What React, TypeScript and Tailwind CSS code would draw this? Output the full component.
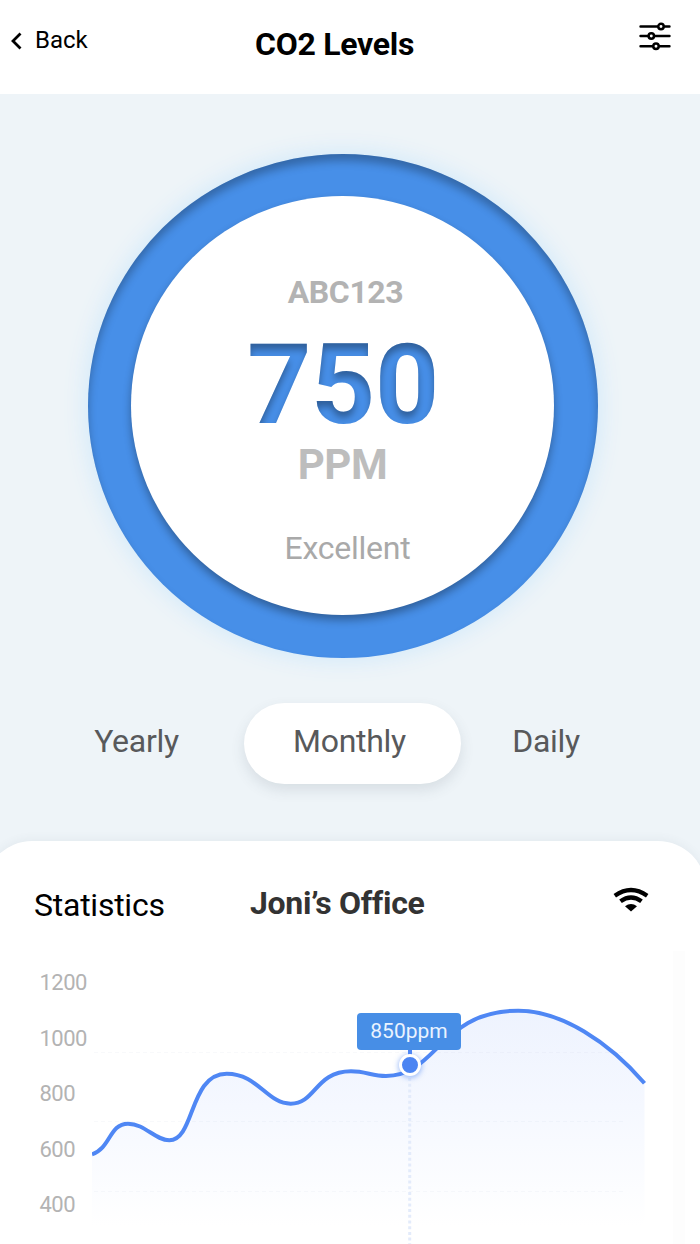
import clsx from "clsx";

const periods = [
  { label: "Yearly", className: "w-[217px] pl-[2px]" },
  { label: "Monthly", className: "w-[217px] pr-[6px]", active: true },
  { label: "Daily", className: "w-[170px]" },
];

const axisLabels = ["1200", "1000", "800", "600", "400"];

const curve =
  "M92 1154.3 C111 1148 109 1123.7 128 1123.7 C145 1123.7 155 1140.3 169.3 1140.3 C195 1140.3 189 1073.7 226.7 1073.7 C258 1073.7 267 1103.7 290.7 1103.7 C316 1103.7 315 1071.3 351 1071.3 C366 1071.3 372 1076 386 1076 C437 1076 440 1010.7 518.3 1010.7 C561 1010.7 609 1042 644.5 1083.3";

function Header() {
  return (
    <header className="flex h-[94px] items-start bg-white pt-6 pr-[29px] text-black">
      <button className="flex w-[255px] items-center gap-3 pl-[10px] text-2xl leading-8">
        <svg width="13" height="20" viewBox="0 0 13 20" fill="none" className="mt-0.5">
          <path d="M10.5 2.5 3 10l7.5 7.5" stroke="black" strokeWidth="2.8" />
        </svg>
        Back
      </button>
      <h1 className="flex-1 text-[32px] leading-10 font-bold tracking-[-0.28px]">CO2 Levels</h1>
      <SettingsIcon />
    </header>
  );
}

function SettingsIcon() {
  return (
    <svg width="32" height="30" viewBox="0 0 32 30" fill="white" stroke="black" className="-mt-[3px]">
      <path d="M1.5 5.5h29M1.5 15h29M1.5 25.3h29" strokeWidth="2.4" strokeLinecap="round" />
      <g strokeWidth="2.5">
        <circle cx="22" cy="5.5" r="2.7" />
        <circle cx="12.3" cy="15" r="2.7" />
        <circle cx="17" cy="25.3" r="2.7" />
      </g>
    </svg>
  );
}

function WifiIcon() {
  return (
    <svg width="36" height="26" viewBox="0 0 36 26" fill="none" stroke="black" className="mt-px">
      <path d="M1.8 9.8Q18 -1.8 34.2 9.8" strokeWidth="4.2" />
      <path d="M7.5 15.3Q18 7.7 28.5 15.3" strokeWidth="4.4" />
      <path d="M12 20.2Q18 16 24 20.2L18 25.4Z" fill="black" stroke="none" />
    </svg>
  );
}

function Gauge() {
  return (
    <div className="flex h-[504px] w-[510px] items-start justify-center rounded-[50%] bg-[#478fe8] pt-[42px] pr-px shadow-[0_0_22px_3px_#d3eafa,inset_0_7px_9px_rgba(0,0,0,0.27)]">
      {/* inner shadow for the big number */}
      <svg width="0" height="0" className="absolute">
        <filter id="inner-shadow" x="-10%" y="-10%" width="120%" height="120%" colorInterpolationFilters="sRGB">
          <feOffset in="SourceAlpha" dy="6" result="offset" />
          <feGaussianBlur in="offset" stdDeviation="3.6" result="blur" />
          <feComposite in="SourceAlpha" in2="blur" operator="out" result="inverse" />
          <feFlood floodColor="#000" floodOpacity="0.33" />
          <feComposite in2="inverse" operator="in" result="shadow" />
          <feMerge>
            <feMergeNode in="SourceGraphic" />
            <feMergeNode in="shadow" />
          </feMerge>
        </filter>
      </svg>
      <div className="flex h-[419px] w-[423px] flex-col items-center rounded-[50%] bg-white pt-[76px] shadow-[0_5px_9px_rgba(0,0,0,0.33)]">
        <p className="pl-1.5 text-[32px] leading-10 font-bold tracking-[-0.4px] text-[#b3b3b3]">ABC123</p>
        <p className="mt-[17px] pl-px text-[112px] leading-[112px] font-bold tracking-[-0.4px] text-[#478fe8] [filter:url(#inner-shadow)]">750</p>
        <p className="text-[42px] leading-[48px] font-bold tracking-[-0.5px] text-[#bdbdbd]">PPM</p>
        <p className="mt-[39px] pl-2.5 text-[32px] leading-10 tracking-[-0.25px] text-[#a9a9a9]">Excellent</p>
      </div>
    </div>
  );
}

function PeriodTabs() {
  return (
    <div className="mt-[45px] flex pl-[27px]">
      {periods.map((p) => (
        <button
          key={p.label}
          className={clsx(
            "h-[81px] rounded-full pb-1.5 text-[32px] leading-10 tracking-[-0.3px] text-[#58595b]",
            p.className,
            p.active && "bg-white shadow-[0_6px_14px_rgba(60,80,95,0.13)]"
          )}
        >
          {p.label}
        </button>
      ))}
    </div>
  );
}

function Chart() {
  return (
    <div className="relative h-[293px] flex-1">
      <svg width="608" height="293" viewBox="92 951 608 293" fill="none">
        <defs>
          <linearGradient id="area" x1="0" y1="1010" x2="0" y2="1226" gradientUnits="userSpaceOnUse">
            <stop stopColor="#eef3fe" />
            <stop offset="0.45" stopColor="#f5f8ff" />
            <stop offset="1" stopColor="#ffffff" />
          </linearGradient>
        </defs>
        <path d="M673 951h12v293h-12z" fill="#fdfdfd" />
        <path d={`${curve} V1226 H92Z`} fill="url(#area)" />
        <path d="M94 1052.5h530M94 1121.5h530M94 1191.5h530" stroke="#a0b0c8" strokeOpacity="0.08" strokeDasharray="4 3" />
        <path d="M409.7 1078v166" stroke="#e3ebfb" strokeWidth="3" strokeDasharray="3 2.7" />
        <path d={curve} stroke="#4f87f4" strokeWidth="4" />
        <path d="M410 1048v8" stroke="#4f87f4" strokeWidth="4" />
      </svg>
      <div className="absolute top-[103px] left-[307px] size-[22px] rounded-full border-[3px] border-white bg-[#4c85f2] shadow-[0_1px_5px_1px_rgba(79,135,244,0.5)]" />
      <div className="absolute top-[62px] left-[265px] h-[37px] w-[104px] rounded-[4px] bg-[#478ee6] text-center text-[21px] leading-[36px] text-[#eaf3ff]">
        850ppm
      </div>
    </div>
  );
}

function Statistics() {
  return (
    <section className="mt-[57px] -mr-1.5 -ml-4 h-[403px] rounded-t-[48px] bg-white pl-4 shadow-[0_-2px_10px_rgba(60,80,95,0.06)]">
      <div className="flex h-[110px] items-start pt-[44px]">
        <h2 className="w-[250px] pl-[34px] text-[32px] leading-10 tracking-[-0.25px] text-black">Statistics</h2>
        <h3 className="-mt-0.5 w-[363px] text-[32px] leading-10 font-bold tracking-[-0.3px] text-[#333]">Joni’s Office</h3>
        <WifiIcon />
      </div>
      <div className="flex">
        <ul className="w-[92px] pt-1 pl-[39.5px] text-[22px] leading-[55.6px] tracking-[-0.5px] text-[#b3b3b3]">
          {axisLabels.map((label) => (
            <li key={label}>{label}</li>
          ))}
        </ul>
        <Chart />
      </div>
    </section>
  );
}

export default function App() {
  return (
    <div className="h-[1244px] w-[700px] overflow-hidden bg-[#eef4f8] font-['Roboto',sans-serif]">
      <Header />
      <main>
        <div className="pt-[60px] pl-[88px]">
          <Gauge />
        </div>
        <PeriodTabs />
        <Statistics />
      </main>
    </div>
  );
}
